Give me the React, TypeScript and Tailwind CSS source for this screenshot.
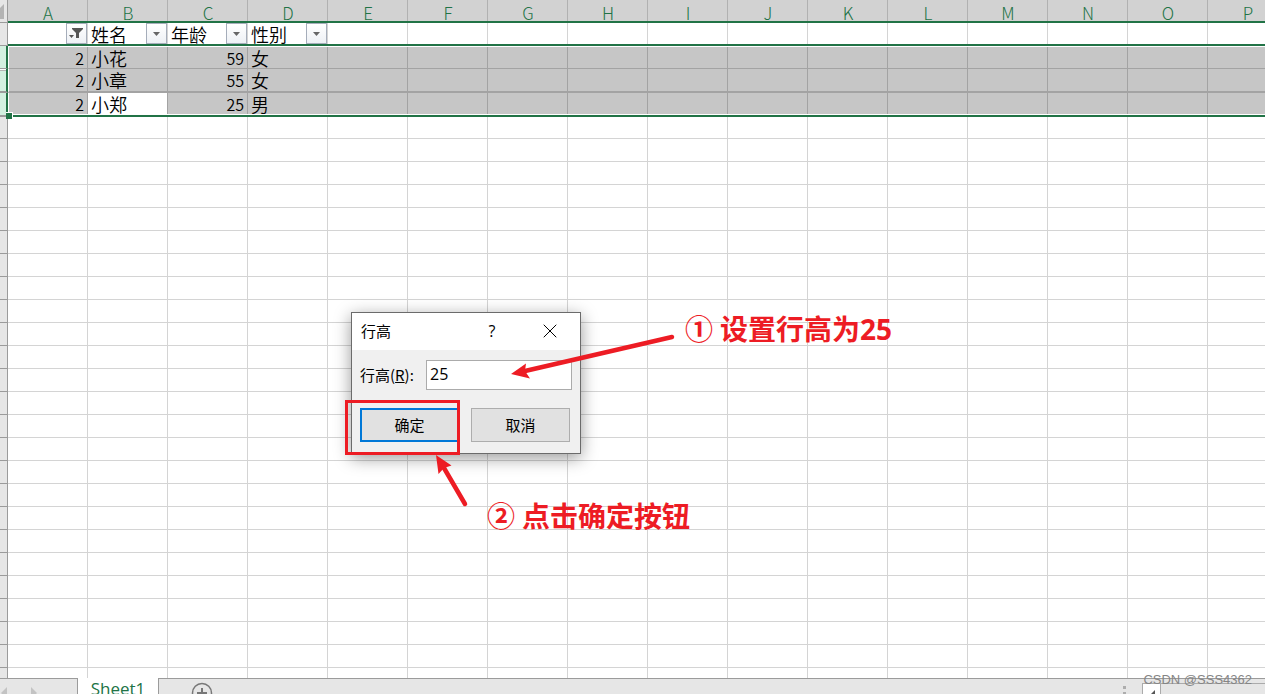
import React from "react";
import { X } from "lucide-react";

type Person = {
  id: number;
  name: string;
  age: number;
  sex: string;
};

const columns = "ABCDEFGHIJKLMNOP".split("");

const people: Person[] = [
  { id: 2, name: "小花", age: 59, sex: "女" },
  { id: 2, name: "小章", age: 55, sex: "女" },
  { id: 2, name: "小郑", age: 25, sex: "男" },
];

const headings = ["", "姓名", "年龄", "性别"];

// vertical grid lines are inset shadows so the green borders stay unbroken
const rowStyles = [
  "h-[23px] [&>td]:border-b [&>td]:border-[#a3a3a3] [&>td]:shadow-[inset_0_1px_#fff,inset_-1px_0_#a3a3a3]",
  "h-6 [&>td]:border-b-2 [&>td]:border-[#a3a3a3] [&>td]:shadow-[inset_-1px_0_#a3a3a3]",
  "h-6 [&>td]:border-b-2 [&>td]:border-[#217346] [&>td]:shadow-[inset_0_-1px_#fff,inset_-1px_0_#a3a3a3]",
];

function FilterButton({ label, active }: { label: string; active?: boolean }) {
  return (
    <button
      aria-label={label}
      className="flex h-[21px] w-[21px] shrink-0 items-center justify-center border border-[#a5adba] bg-linear-to-b from-white to-[#eef1f5]"
    >
      {active ? (
        <svg width="15" height="13" viewBox="0 0 15 13" fill="#555">
          <path d="M3 1h11v1l-4 4v5H7V6L3 2z" />
          <path d="M0 8h5L2.500 11z" />
        </svg>
      ) : (
        <svg width="7" height="4" viewBox="0 0 7 4" fill="#666">
          <path d="M0 0h7L3.500 4z" />
        </svg>
      )}
    </button>
  );
}

function Sheet() {
  return (
    <table className="w-[1288px] table-fixed border-separate border-spacing-0 text-lg leading-5 text-black">
      <colgroup>
        <col className="w-2" />
        {columns.map((c) => (
          <col key={c} className="w-20" />
        ))}
      </colgroup>
      <thead>
        <tr className="h-[23px]">
          <th className="border-r border-b border-[#9b9b9b] bg-[#e6e6e6] p-0">
            <svg width="4" height="15" viewBox="0 0 4 15" fill="#b4b4b4">
              <path d="M0 4L4 0v15H0z" />
            </svg>
          </th>
          {columns.map((c) => (
            <th
              key={c}
              className="border-b-2 border-[#217346] bg-[#d2d2d2] p-0 pt-1 text-[17px] leading-[17px] font-light text-[#217346] shadow-[inset_-1px_0_#b1b1b1]"
            >
              {c}
            </th>
          ))}
        </tr>
      </thead>
      <tbody>
        <tr className="h-[23px]">
          <td className="border-r border-b border-[#9b9b9b] bg-[#e6e6e6] p-0" />
          {columns.map((c, i) => (
            <td
              key={c}
              className="border-b-2 border-[#217346] bg-white p-0 align-top shadow-[inset_-1px_0_#d4d4d4]"
            >
              {i < headings.length && (
                <div className="flex h-[21px] items-start justify-between pr-px pl-[3px]">
                  <span className="leading-[22px] font-[350]">{headings[i]}</span>
                  <FilterButton label={`筛选 ${headings[i]}`} active={i === 0} />
                </div>
              )}
            </td>
          ))}
        </tr>
        {people.map((p, r) => (
          <tr key={p.name} className={rowStyles[r]}>
            <td className="relative border-r-2 border-r-[#217346]! border-b-[#9b9b9b]! bg-[#d3f0e0] p-0 shadow-none!">
              {r === 1 && <div className="absolute inset-x-0 top-0 h-0.5 border-b border-[#b5b5b5] bg-white" />}
              {r === 2 && (
                <div className="absolute -right-[7px] -bottom-1 size-[7px] border-t border-r border-white bg-[#217346]" />
              )}
            </td>
            {columns.map((c, i) => (
              <td
                key={c}
                className={`pb-0 pl-[3px] font-[350] ${r === 0 ? "pt-px" : "pt-0"} ${
                  i === 1 && r === 2 ? "bg-white" : "bg-[#c6c6c6]"
                } ${i === 0 ? "border-l border-l-white!" : ""} ${
                  i === 0 || i === 2 ? "pr-1 text-right text-base leading-5" : ""
                }`}
              >
                {[p.id, p.name, p.age, p.sex][i]}
              </td>
            ))}
          </tr>
        ))}
        {Array.from({ length: 60 }, (_, r) => (
          <tr key={r} className={r === 0 ? "h-[22px]" : "h-[23px]"}>
            <td className="border-r border-b border-[#9b9b9b] bg-[#e6e6e6] p-0" />
            {columns.map((c) => (
              <td key={c} className="border-r border-b border-[#d4d4d4] p-0" />
            ))}
          </tr>
        ))}
      </tbody>
    </table>
  );
}

function RowHeightDialog() {
  return (
    <div
      role="dialog"
      aria-labelledby="dialog-title"
      className="absolute top-[312px] left-[351px] w-[230px] border border-[#6b6b6b] bg-[#f0f0f0] text-[15px] leading-5 text-black shadow-[0_4px_16px_rgba(0,0,0,0.4)]"
    >
      <div className="flex h-[37px] items-center bg-white pb-0.5 pl-[9px]">
        <h2 id="dialog-title" className="flex-1">行高</h2>
        <button aria-label="帮助" className="w-14 font-['Open_Sans'] text-base">?</button>
        <button aria-label="关闭" className="flex w-[60px] justify-center">
          <X size={24} strokeWidth={1} />
        </button>
      </div>
      <div className="px-2 pt-[10px] pb-[11px]">
        <div className="flex items-center justify-between">
          <label htmlFor="height">
            行高(<u>R</u>):
          </label>
          <input
            id="height"
            defaultValue="25"
            className="h-[30px] w-[146px] border border-[#ababab] bg-white px-[3px] pb-0.5 font-['Open_Sans'] text-base"
          />
        </div>
        <div className="mt-[18px] flex gap-3">
          <button className="h-[34px] w-[99px] border-2 border-[#0078d7] bg-[#e1e1e1]">确定</button>
          <button className="h-[34px] w-[99px] border border-[#adadad] bg-[#e1e1e1]">取消</button>
        </div>
      </div>
    </div>
  );
}

function Annotations() {
  return (
    <div className="pointer-events-none absolute inset-0 text-[28px] leading-8 font-bold text-[#ed1c24]">
      <div className="absolute top-[400px] left-[345px] h-[55px] w-[115px] border-3 border-[#ed1c24]" />
      <svg className="absolute top-[300px] left-[400px]" width="300" height="220" viewBox="400 300 300 220" fill="#ed1c24">
        <path d="M672 337L525 371" stroke="#ed1c24" strokeWidth="4.500" strokeLinecap="round" />
        <path d="M511 374L526 363.500L525 371L530 378.500z" />
        <path d="M465 504L444 468" stroke="#ed1c24" strokeWidth="4.500" strokeLinecap="round" />
        <path d="M436 455L451.500 465.500L444 468L438.500 474z" />
      </svg>
      <p className="absolute top-[312px] left-[685px] flex gap-[7px] whitespace-nowrap">
        <span>①</span>
        <span>设置行高为<span className="font-['Open_Sans']">25</span></span>
      </p>
      <p className="absolute top-[499px] left-[487px] flex gap-[7px] whitespace-nowrap">
        <span>②</span>
        <span>点击确定按钮</span>
      </p>
    </div>
  );
}

function SheetBar() {
  return (
    <div className="flex h-4 shrink-0 overflow-hidden bg-[#e6e6e6]">
      <div className="flex w-[78px] items-start gap-6 border-t border-r border-[#9b9b9b] pt-2">
        <svg width="7" height="12" viewBox="0 0 7 12" fill="#c3c3c3">
          <path d="M7 0v12L1 6z" />
        </svg>
        <svg width="7" height="12" viewBox="0 0 7 12" fill="#c3c3c3">
          <path d="M0 0v12l6-6z" />
        </svg>
      </div>
      <button className="flex w-20 items-start justify-center bg-white font-['Open_Sans'] text-[17px] leading-[22px] text-[#217346]">
        Sheet1
      </button>
      <div className="flex flex-1 items-start border-t border-l border-[#9b9b9b]">
        <button aria-label="新工作表" className="ml-8 pt-[3px]">
          <svg width="22" height="22" viewBox="0 0 22 22" fill="none" stroke="#777">
            <circle cx="11" cy="11" r="9.500" strokeWidth="1.500" />
            <path d="M11 6v10M6 11h10" strokeWidth="2" />
          </svg>
        </button>
        <div className="mt-[7px] ml-auto flex w-[142px] items-start">
          <svg width="3" height="12" viewBox="0 0 3 12" fill="#adadad">
            <path d="M0 0h3v3H0zM0 6h3v3H0z" />
          </svg>
          <div className="-mt-[3px] ml-4 flex flex-1 border-t border-l border-[#ababab]">
            <button aria-label="向左滚动" className="h-5 w-[18px] border-r border-[#ababab] bg-white pt-1">
              <svg className="mx-auto" width="6" height="12" viewBox="0 0 6 12" fill="#555">
                <path d="M6 0v12L0 6z" />
              </svg>
            </button>
          </div>
        </div>
      </div>
    </div>
  );
}

export default function App() {
  return (
    <div className="relative flex h-screen flex-col overflow-hidden bg-white font-['Noto_Sans_CJK_SC',sans-serif]">
      <div className="min-h-0 flex-1 overflow-hidden">
        <Sheet />
      </div>
      <SheetBar />
      <RowHeightDialog />
      <Annotations />
      <span className="absolute right-[13px] bottom-[6px] font-['Liberation_Sans'] text-[13px] leading-4 text-[#858585]">
        CSDN @SSS4362
      </span>
    </div>
  );
}
